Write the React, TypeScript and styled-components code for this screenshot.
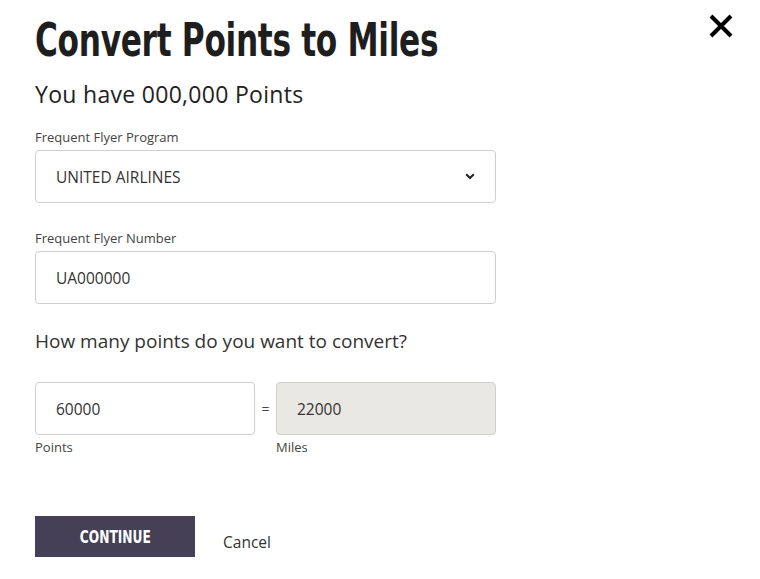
import * as React from "react";
import styled, {createGlobalStyle} from "styled-components";

const GlobalStyle = createGlobalStyle`
	html, body {
		margin: 0;
		padding: 0;
		background: #ffffff;
	}
	body {
		font-family: "Open Sans", "Noto Sans", sans-serif;
		color: #333333;
	}
`

const Modal = styled.div`
	position: relative;
	width: 760px;
	height: 579px;
	box-sizing: border-box;
	padding: 14px 0 0 35px;
	display: flex;
	flex-direction: column;
`

const Title = styled.h1`
	margin: 0;
	font-family: "DejaVu Sans", sans-serif;
	font-weight: 700;
	font-size: 47px;
	line-height: 52px;
	color: #1e1e1e;
	letter-spacing: -0.5px;
	transform: scaleX(0.665);
	transform-origin: left center;
	white-space: nowrap;
`

const CloseButton = styled.button`
	position: absolute;
	top: 13px;
	right: 26px;
	width: 26px;
	height: 26px;
	padding: 0;
	border: none;
	background: none;
	cursor: pointer;
	display: flex;
	align-items: center;
	justify-content: center;
`

const Balance = styled.div`
	margin-top: 14px;
	font-size: 23px;
	line-height: 28px;
	letter-spacing: 0.3px;
	color: #222222;
`

const Field = styled.div<{ $width?: number }>`
	display: flex;
	flex-direction: column;
	width: ${(p) => p.$width ?? 461}px;
`

const Label = styled.label`
	font-size: 13px;
	line-height: 16px;
	color: #444444;
	margin-bottom: 5px;
`

const SubLabel = styled.span`
	font-size: 13px;
	line-height: 16px;
	color: #444444;
	margin-top: 4px;
`

const Box = styled.div<{ $readonly?: boolean }>`
	height: 53px;
	box-sizing: border-box;
	border: 1px solid #cfcfcf;
	border-radius: 4px;
	background: ${(p) => (p.$readonly ? "#e9e8e3" : "#ffffff")};
	padding: 0 20px;
	display: flex;
	align-items: center;
	justify-content: space-between;
	font-size: 15.5px;
	color: #333333;
`

const Form = styled.div`
	display: flex;
	flex-direction: column;
	margin-top: 21px;
	gap: 27px;
`

const Question = styled.div`
	margin-top: 26px;
	font-size: 19px;
	line-height: 22px;
	color: #333333;
`

const ConvertRow = styled.div`
	display: flex;
	align-items: flex-start;
	margin-top: 30px;
`

const Equals = styled.span`
	width: 21px;
	height: 53px;
	display: flex;
	align-items: center;
	justify-content: center;
	font-size: 14px;
	color: #444444;
`

const Actions = styled.div`
	display: flex;
	align-items: center;
	gap: 28px;
	margin-top: 61px;
`

const PrimaryButton = styled.button`
	width: 160px;
	height: 41px;
	border: none;
	border-radius: 0;
	background: #454055;
	color: #ffffff;
	cursor: pointer;
	display: flex;
	align-items: center;
	justify-content: center;
`

const ButtonText = styled.span`
	display: inline-block;
	font-family: "DejaVu Sans", sans-serif;
	font-weight: 700;
	font-size: 17px;
	transform: scaleX(0.72);
`

const LinkButton = styled.button`
	border: none;
	background: none;
	padding: 0;
	margin-top: 10px;
	font-family: "Open Sans", "Noto Sans", sans-serif;
	font-size: 15.5px;
	color: #333333;
	cursor: pointer;
`

const Chevron = () => (
	<svg width="10" height="7" viewBox="0 0 10 7">
		<path d="M1.2 1.2 L5 5 L8.8 1.2" fill="none" stroke="#222" strokeWidth="2" />
	</svg>
)

const CloseIcon = () => (
	<svg width="24" height="24" viewBox="0 0 24 24">
		<path d="M2 2 L22 22 M22 2 L2 22" stroke="#000" strokeWidth="4" />
	</svg>
)

const App = () => {
	const points = 60000
	const miles = 22000

	return (
		<>
			<GlobalStyle />
			<Modal>
				<CloseButton aria-label="Close">
					<CloseIcon />
				</CloseButton>

				<Title>Convert Points to Miles</Title>
				<Balance>You have 000,000 Points</Balance>

				<Form>
					<Field>
						<Label>Frequent Flyer Program</Label>
						<Box>
							<span>UNITED AIRLINES</span>
							<Chevron />
						</Box>
					</Field>
					<Field>
						<Label>Frequent Flyer Number</Label>
						<Box>UA000000</Box>
					</Field>
				</Form>

				<Question>How many points do you want to convert?</Question>

				<ConvertRow>
					<Field $width={220}>
						<Box>{points}</Box>
						<SubLabel>Points</SubLabel>
					</Field>
					<Equals>=</Equals>
					<Field $width={220}>
						<Box $readonly>{miles}</Box>
						<SubLabel>Miles</SubLabel>
					</Field>
				</ConvertRow>

				<Actions>
					<PrimaryButton>
						<ButtonText>CONTINUE</ButtonText>
					</PrimaryButton>
					<LinkButton>Cancel</LinkButton>
				</Actions>
			</Modal>
		</>
	)
}

export default App;
